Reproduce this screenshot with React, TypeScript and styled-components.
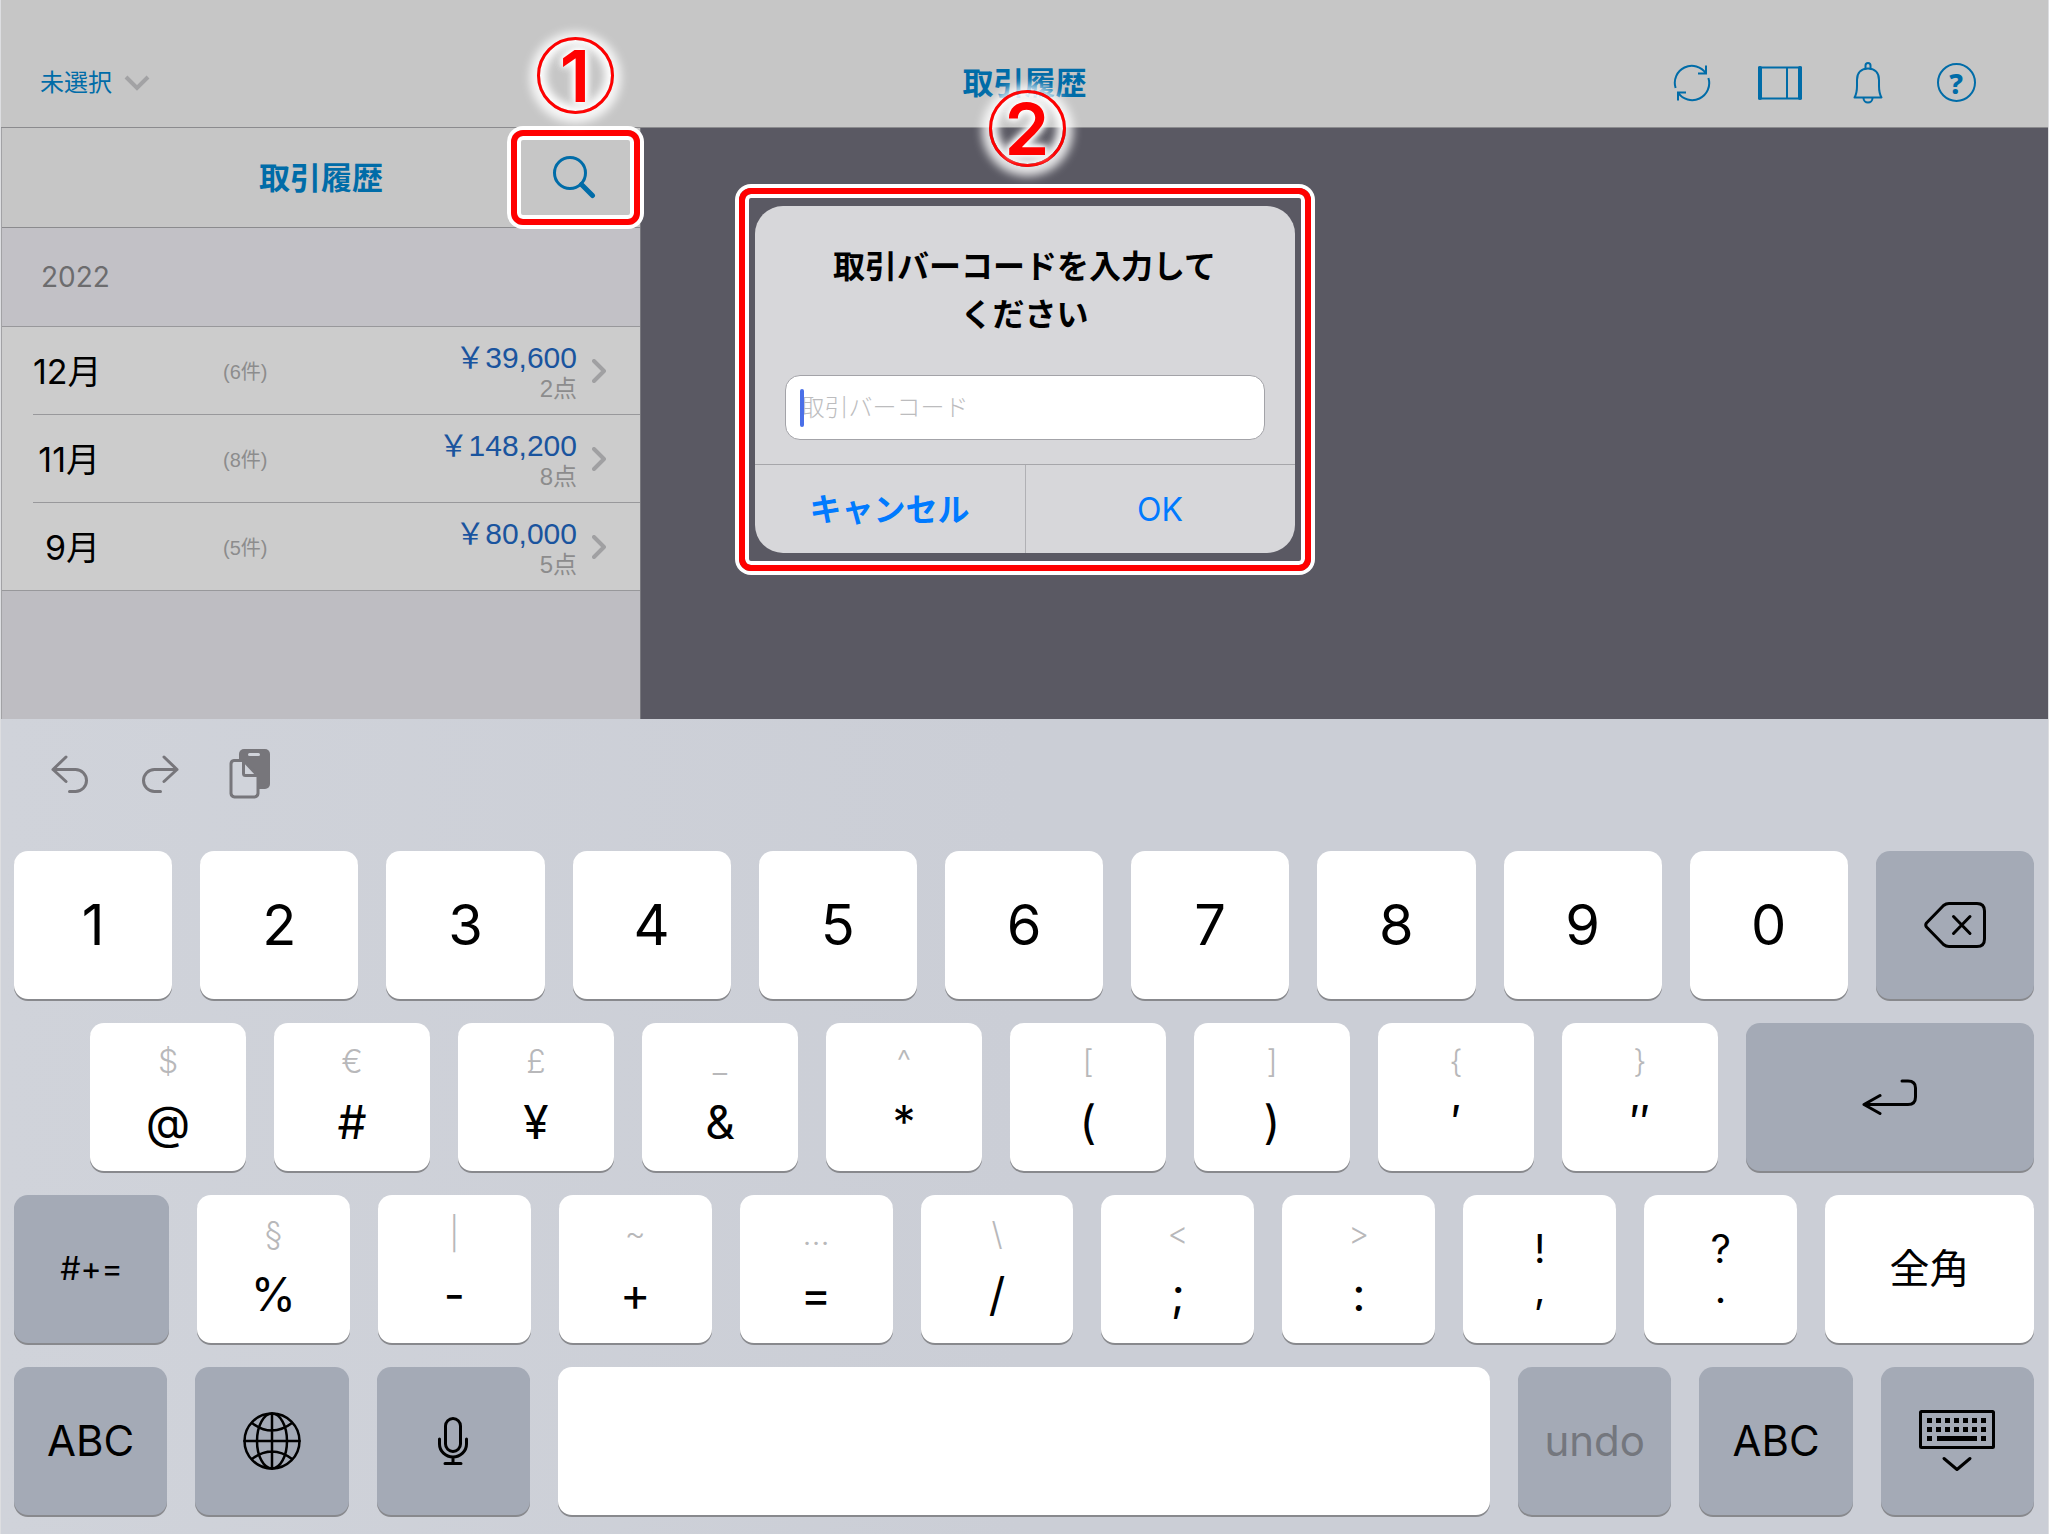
import React from "react";
import styled, { createGlobalStyle, css } from "styled-components";

const FONT = `Inter, "Noto Sans CJK JP", sans-serif`;
const FONT_LIST = `"Liberation Sans", "Noto Sans CJK JP", sans-serif`;
const BLUE = "#006ca8";
const LINE = "#8b8b8e";
const RED = "#ff0000";

const GlobalStyle = createGlobalStyle`
  * { box-sizing: border-box; }
  body { margin: 0; background: #dddee1; font-family: ${FONT}; }
  button, input { font: inherit; color: inherit; }
  button { margin: 0; padding: 0; border: 0; background: none; }
  h1, h2, h3, p, ul { margin: 0; padding: 0; }
  svg { display: block; flex: none; }
`;

const Screen = styled.div`
  position: relative;
  display: flex;
  flex-direction: column;
  min-height: 100vh;
  padding: 0 1px;
`;

/* ---------- top bar ---------- */

const TopBar = styled.header`
  display: grid;
  grid-template-columns: 1fr auto 1fr;
  align-items: center;
  height: 128px;
  padding: 38px 39px 0;
  background: #c6c6c6;
  border-bottom: 1px solid ${LINE};
  color: ${BLUE};
`;

const Title = styled.h1`
  font-size: 31px;
  line-height: 40px;
  font-weight: 700;
  color: ${BLUE};
  text-align: center;
`;

const StoreButton = styled.button`
  display: flex;
  align-items: center;
  gap: 12px;
  justify-self: start;
  font-size: 24px;
  line-height: 32px;
`;

const TopActions = styled.nav`
  display: flex;
  justify-self: end;
  padding-right: 9px;
`;

const TopAction = styled.button`
  display: flex;
  justify-content: center;
  align-items: center;
  width: 88px;
  height: 64px;
`;

/* ---------- history list ---------- */

const Main = styled.main`
  display: flex;
  flex: 1;
  background: #5a5963;
`;

const Sidebar = styled.aside`
  width: 640px;
  background: #bebdc2;
  border-left: 1px solid #a2a2a5;
  border-right: 1px solid #77777d;
`;

const SidebarHeader = styled.div`
  display: grid;
  grid-template-columns: 129px 1fr 129px;
  align-items: center;
  height: 100px;
  background: #c6c6c6;
  border-bottom: 1px solid ${LINE};
`;

const SearchButton = styled.button`
  position: relative;
  grid-column: 3;
  display: flex;
  justify-content: center;
  align-items: center;
  height: 95px;
  padding: 0 4px 2px 0;
  color: ${BLUE};
`;

const SidebarTitle = styled(Title).attrs({ as: "h2" })`
  grid-column: 2;
`;

const YearHeading = styled.h3`
  display: flex;
  align-items: center;
  height: 99px;
  padding-left: 39px;
  background: #c2c1c6;
  border-bottom: 1px solid #98989b;
  color: #6c6c6e;
  font-size: 28px;
  font-weight: 400;
`;

const MonthList = styled.ul`
  list-style: none;
  background: #cccccc;
  border-bottom: 1px solid #98989b;
`;

const MonthItem = styled.li`
  margin-left: 31px;
  & + & {
    border-top: 1px solid #98989b;
  }
`;

const MonthButton = styled.button`
  display: grid;
  grid-template-columns: 67px 1fr auto 14px;
  align-items: center;
  width: 100%;
  height: 87px;
  padding-right: 34px;
  text-align: right;
`;

const MonthName = styled.span`
  padding-bottom: 2px;
  font-size: 34px;
  white-space: nowrap;
  color: #000;
`;

const CountText = styled.span`
  padding-left: 123px;
  font-family: ${FONT_LIST};
  font-size: 20px;
  text-align: left;
  color: #8c8c8d;
`;

const Sums = styled.span`
  display: flex;
  flex-direction: column;
  margin-right: 15px;
  padding-top: 2px;
  font-family: ${FONT_LIST};
`;

const Amount = styled.span`
  font-size: 30px;
  line-height: 34px;
  color: #1a549e;
`;

const Points = styled.span`
  font-size: 24px;
  line-height: 28px;
  color: #8c8c8d;
`;

/* ---------- guide marks ---------- */

const markFrame = css`
  border: 6px solid ${RED};
  border-radius: 12px;
  box-shadow: 0 0 0 4px #fff, inset 0 0 0 4px #fff;
`;

const Mark = styled.span`
  position: absolute;
  inset: 0;
  ${markFrame}
`;

const StepBadge = styled.span<{ $rise: number; $inset: number }>`
  position: absolute;
  z-index: 2;
  bottom: calc(100% + ${(p) => p.$rise}px);
  left: calc(50% - ${(p) => p.$inset}px);
  display: flex;
  justify-content: center;
  align-items: center;
  width: 77px;
  height: 77px;
  border: 3px solid ${RED};
  border-radius: 50%;
  box-shadow: 0 2px 10px 7px rgba(255, 255, 255, 0.85), inset 0 0 8px 6px #fff;
  color: ${RED};
  font-size: 72px;
  line-height: 72px;
  font-weight: 600;
  text-shadow: 0 0 4px #fff, 0 0 8px #fff, 0 0 8px #fff, 0 0 12px #fff;
`;

/* ---------- dialog ---------- */

const Overlay = styled.div`
  position: absolute;
  inset: 0 0 auto;
  display: flex;
  justify-content: center;
  padding-top: 188px;
`;

const DialogMark = styled.div`
  position: relative;
  padding: 12px 10px;
  ${markFrame}
`;

const Dialog = styled.form`
  width: 540px;
  border-radius: 28px;
  background: #d7d7da;
  overflow: hidden;
`;

const DialogBody = styled.div`
  display: flex;
  flex-direction: column;
  gap: 36px;
  padding: 37px 30px 24px;
`;

const DialogTitle = styled.h2`
  font-size: 32px;
  line-height: 48px;
  font-weight: 700;
  text-align: center;
  color: #000;
`;

const Field = styled.div`
  position: relative;
`;

const BarcodeInput = styled.input`
  display: block;
  width: 100%;
  height: 65px;
  padding: 0 15px;
  border: 1px solid #a3a3a8;
  border-radius: 15px;
  background: #fff;
  font-size: 24px;
  font-weight: 300;
  outline: none;
  &::placeholder {
    color: #bcbcbe;
    opacity: 1;
  }
`;

const Caret = styled.span`
  position: absolute;
  top: 14px;
  bottom: 13px;
  left: 15px;
  width: 4px;
  border-radius: 2px;
  background: #4a6fe8;
`;

const DialogActions = styled.div`
  display: grid;
  grid-template-columns: 1fr 1fr;
  border-top: 1px solid #a6a6aa;
`;

const DialogButton = styled.button<{ $strong?: boolean }>`
  height: 88px;
  padding-bottom: ${(p) => (p.$strong ? 4 : 0)}px;
  font-size: 32px;
  font-weight: ${(p) => (p.$strong ? 700 : 400)};
  color: #007aff;
  & + & {
    border-left: 1px solid #b0b0b4;
  }
`;

/* ---------- keyboard ---------- */

const Keyboard = styled.section`
  position: relative;
  padding: 0 14px 19px 13px;
  background: linear-gradient(90deg, #d0d3da, #cbced6 50%, #cbced6);
`;

const KeyboardTools = styled.div`
  display: flex;
  align-items: center;
  gap: 39px;
  height: 110px;
  margin-bottom: 22px;
  padding-left: 30px;
  color: #77767b;
`;

const ToolButton = styled.button`
  display: flex;
  justify-content: center;
  width: 51px;
`;

const KeyRows = styled.div`
  display: flex;
  flex-direction: column;
  gap: 24px;
`;

const KeyRow = styled.div<{ $indent?: number }>`
  display: flex;
  gap: 28px;
  padding-left: ${(p) => p.$indent ?? 0}px;
`;

const KeyCap = styled.button<{ $grow: number; $dark?: boolean; $dim?: boolean; $size: number }>`
  display: flex;
  flex: ${(p) => p.$grow} 1 0;
  flex-direction: column;
  justify-content: center;
  align-items: center;
  min-width: 0;
  height: 148px;
  border-radius: 14px;
  background: ${(p) => (p.$dark ? "#a4aab6" : "#fff")};
  box-shadow: 0 2px 0 #88898d;
  font-size: ${(p) => p.$size}px;
  line-height: 1;
  color: ${(p) => (p.$dim ? "#74777e" : "#000")};
`;

const KeyHint = styled.span`
  margin-bottom: 20px;
  font-size: 32px;
  line-height: 32px;
  font-weight: 300;
  color: #b8b8ba;
`;

const KeyMain = styled.span`
  padding-bottom: 2px;
  font-size: 46px;
  line-height: 48px;
`;

const KeyStack = styled.span`
  font-size: 40px;
  line-height: 40px;
  white-space: pre-line;
`;

/* ---------- icons ---------- */

const line = {
  fill: "none",
  stroke: "currentColor",
  strokeLinecap: "round" as const,
  strokeLinejoin: "round" as const,
};

const DownIcon = () => (
  <svg width="26" height="18" viewBox="0 0 26 18" {...line} stroke="#a2a2a4" strokeWidth="4" strokeLinecap="butt" strokeLinejoin="miter">
    <path d="M2 3 13 14 24 3" />
  </svg>
);

const NextIcon = () => (
  <svg width="14" height="24" viewBox="0 0 14 24" {...line} stroke="#a0a0a2" strokeWidth="4">
    <path d="M2 2 12 12 2 22" />
  </svg>
);

const RefreshIcon = () => (
  <svg width="38" height="38" viewBox="0 0 38 38" {...line} strokeWidth="2" strokeLinecap="butt" strokeLinejoin="miter">
    <path d="M2.600 24A17 17 0 0 1 33 9.500M33 1.500V9.500H25" />
    <path d="M35.400 14A17 17 0 0 1 5 28.500M5 36.500V28.500H13" />
  </svg>
);

const PanelIcon = () => (
  <svg width="46" height="34" viewBox="0 0 46 34" {...line} strokeWidth="2">
    <rect x="2" y="1.500" width="42" height="31" />
    <path d="M3 2V32M43 2V32" strokeWidth="4" />
    <path d="M30 2V32" />
  </svg>
);

const BellIcon = () => (
  <svg width="30" height="42" viewBox="0 0 30 42" {...line} strokeWidth="2">
    <path d="M1.500 35.500C3.500 32 4 29 4 24V18C4 10 9 6.500 15 6.500S26 10 26 18V24C26 29 26.500 32 28.500 35.500Z" />
    <path d="M12.500 6.500V3.500A2.500 2.500 0 0 1 17.500 3.500V6.500M10.500 36A4.500 4.500 0 0 0 19.500 36" />
  </svg>
);

const HelpRing = styled.span`
  display: flex;
  justify-content: center;
  align-items: center;
  width: 39px;
  height: 39px;
  border: 2px solid ${BLUE};
  border-radius: 50%;
  font-family: "Noto Sans", sans-serif;
  font-size: 28px;
  line-height: 28px;
  font-weight: 800;
`;

const SearchIcon = () => (
  <svg width="44" height="44" viewBox="0 0 44 44" {...line}>
    <circle cx="18" cy="18" r="15.500" strokeWidth="3" />
    <path d="M29.500 29.500 40.500 40.500" strokeWidth="5" />
  </svg>
);

const UndoIcon = () => (
  <svg width="38" height="38" viewBox="0 0 38 38" {...line} strokeWidth="3">
    <path d="M15 2 2 14.500 15 26.500M2 14.500H24.500A11 11 0 0 1 24.500 36.500H18.500" />
  </svg>
);

const RedoIcon = () => (
  <svg width="38" height="38" viewBox="0 0 38 38" {...line} strokeWidth="3">
    <path d="M23 2 36 14.500 23 26.500M36 14.500H13.500A11 11 0 0 0 13.500 36.500H19.500" />
  </svg>
);

const PasteIcon = () => (
  <svg width="42" height="50" viewBox="0 0 42 50" {...line}>
    <rect x="10" y="0" width="31" height="40" rx="5" fill="currentColor" stroke="none" />
    <rect x="19" y="4" width="12" height="3" rx="1.500" fill="#d0d3da" stroke="none" />
    <path
      d="M5 11.500H14.500L29 27V44.500A4 4 0 0 1 25.500 48H5.500A4 4 0 0 1 2 44.500V15A3.500 3.500 0 0 1 5 11.500Z"
      fill="#d0d3da"
      strokeWidth="3"
    />
    <path d="M14.500 12V24.500A2 2 0 0 0 16.500 26.500H28.500" strokeWidth="3" />
  </svg>
);

const DeleteIcon = () => (
  <svg width="62" height="46" viewBox="0 0 62 46" {...line} strokeWidth="3">
    <path d="M19.500 3.500Q22 1.500 25 1.500H53Q60.500 1.500 60.500 9V37Q60.500 44.500 53 44.500H25Q22 44.500 19.500 42.500L2.500 25Q1 23 2.500 21Z" />
    <path d="M29.500 14.500 46 31.500M46 14.500 29.500 31.500" />
  </svg>
);

const ReturnIcon = () => (
  <svg width="56" height="36" viewBox="0 0 56 36" {...line} strokeWidth="3">
    <path d="M18 16.500 2 25.500 18 34.500M2 25.500H46Q53.500 25.500 53.500 18V9Q53.500 2 46 2H40" />
  </svg>
);

const GlobeIcon = () => (
  <svg width="58" height="58" viewBox="0 0 58 58" {...line} strokeWidth="2.500">
    <circle cx="29" cy="29" r="27.500" />
    <ellipse cx="29" cy="29" rx="15" ry="27.500" />
    <path d="M29 1.500V56.500M1.500 29H56.500M9 11Q29 26 49 11M9 47Q29 32 49 47" />
  </svg>
);

const MicIcon = () => (
  <svg width="30" height="48" viewBox="0 0 30 48" {...line} strokeWidth="3">
    <rect x="7.500" y="1.500" width="15" height="33" rx="7.500" />
    <path d="M1.500 22V27A13.500 13 0 0 0 28.500 27V22M15 40V46M7 46.500H23" />
  </svg>
);

const HideKeyboardIcon = () => {
  const columns = [0, 1, 2, 3, 4, 5, 6];
  return (
    <svg width="76" height="62" viewBox="0 0 76 62" {...line} strokeWidth="3">
      <rect x="1.500" y="1.500" width="73" height="36" rx="1" />
      <g fill="currentColor" stroke="none">
        {columns.map((c) => (
          <React.Fragment key={c}>
            <rect x={8 + c * 9} y="8" width="5" height="5" />
            <rect x={8 + c * 9} y="17" width="5" height="5" />
          </React.Fragment>
        ))}
        <rect x="8" y="26" width="5" height="5" />
        <rect x="18" y="26" width="40" height="5" />
        <rect x="62" y="26" width="5" height="5" />
      </g>
      <path d="M25 48.500 38 59.500 51 48.500" />
    </svg>
  );
};

/* ---------- data ---------- */

const months = [
  { name: "12月", count: "(6件)", amount: "￥39,600", points: "2点" },
  { name: "11月", count: "(8件)", amount: "￥148,200", points: "8点" },
  { name: "9月", count: "(5件)", amount: "￥80,000", points: "5点" },
];

const digits = ["1", "2", "3", "4", "5", "6", "7", "8", "9", "0"];

const symbolRow = [
  ["$", "@"],
  ["€", "#"],
  ["£", "¥"],
  ["_", "&"],
  ["^", "*"],
  ["[", "("],
  ["]", ")"],
  ["{", "′"],
  ["}", "″"],
];

const punctuationRow = [
  ["§", "%"],
  ["|", "-"],
  ["~", "+"],
  ["…", "="],
  ["\\", "/"],
  ["<", ";"],
  [">", ":"],
];

const stackedKeys = ["!\n,", "?\n."];

type KeyProps = {
  grow?: number;
  dark?: boolean;
  dim?: boolean;
  size?: number;
  label?: string;
  children?: React.ReactNode;
};

const Key = ({ grow = 153, dark, dim, size = 42, label, children }: KeyProps) => (
  <KeyCap type="button" $grow={grow} $dark={dark} $dim={dim} $size={size} aria-label={label}>
    {children}
  </KeyCap>
);

const HintKey = ({ hint, main, grow }: { hint: string; main: string; grow?: number }) => (
  <Key grow={grow}>
    <KeyHint>{hint}</KeyHint>
    <KeyMain>{main}</KeyMain>
  </Key>
);

export default function App() {
  return (
    <Screen>
      <GlobalStyle />
      <TopBar>
        <StoreButton type="button">
          未選択
          <DownIcon />
        </StoreButton>
        <Title>取引履歴</Title>
        <TopActions>
          <TopAction type="button" aria-label="更新"><RefreshIcon /></TopAction>
          <TopAction type="button" aria-label="パネル"><PanelIcon /></TopAction>
          <TopAction type="button" aria-label="通知"><BellIcon /></TopAction>
          <TopAction type="button" aria-label="ヘルプ"><HelpRing>?</HelpRing></TopAction>
        </TopActions>
      </TopBar>

      <Main>
        <Sidebar>
          <SidebarHeader>
            <SidebarTitle>取引履歴</SidebarTitle>
            <SearchButton type="button" aria-label="検索">
              <SearchIcon />
              <Mark />
              <StepBadge $rise={16} $inset={39}>1</StepBadge>
            </SearchButton>
          </SidebarHeader>
          <YearHeading>2022</YearHeading>
          <MonthList>
            {months.map((m) => (
              <MonthItem key={m.name}>
                <MonthButton type="button">
                  <MonthName>{m.name}</MonthName>
                  <CountText>{m.count}</CountText>
                  <Sums>
                    <Amount>{m.amount}</Amount>
                    <Points>{m.points}</Points>
                  </Sums>
                  <NextIcon />
                </MonthButton>
              </MonthItem>
            ))}
          </MonthList>
        </Sidebar>
      </Main>

      <Keyboard aria-label="キーボード">
        <KeyboardTools>
          <ToolButton type="button" aria-label="取り消す"><UndoIcon /></ToolButton>
          <ToolButton type="button" aria-label="やり直す"><RedoIcon /></ToolButton>
          <ToolButton type="button" aria-label="ペースト"><PasteIcon /></ToolButton>
        </KeyboardTools>
        <KeyRows>
          <KeyRow>
            {digits.map((d) => (
              <Key key={d} size={56}>{d}</Key>
            ))}
            <Key dark label="削除"><DeleteIcon /></Key>
          </KeyRow>
          <KeyRow $indent={76}>
            {symbolRow.map(([hint, main]) => (
              <HintKey key={main} hint={hint} main={main} grow={156} />
            ))}
            <Key grow={288} dark label="改行"><ReturnIcon /></Key>
          </KeyRow>
          <KeyRow>
            <Key grow={155} dark size={32}>#+=</Key>
            {punctuationRow.map(([hint, main]) => (
              <HintKey key={main} hint={hint} main={main} />
            ))}
            {stackedKeys.map((text) => (
              <Key key={text}>
                <KeyStack>{text}</KeyStack>
              </Key>
            ))}
            <Key grow={209} size={40}>全角</Key>
          </KeyRow>
          <KeyRow>
            <Key dark>ABC</Key>
            <Key dark label="次のキーボード"><GlobeIcon /></Key>
            <Key dark label="音声入力"><MicIcon /></Key>
            <Key grow={930} label="空白" />
            <Key dark dim>undo</Key>
            <Key dark>ABC</Key>
            <Key dark label="キーボードを隠す"><HideKeyboardIcon /></Key>
          </KeyRow>
        </KeyRows>
      </Keyboard>

      <Overlay>
        <DialogMark>
          <StepBadge $rise={27} $inset={36}>2</StepBadge>
          <Dialog role="dialog" aria-labelledby="dialog-title">
            <DialogBody>
              <DialogTitle id="dialog-title">
                取引バーコードを入力して
                <br />
                ください
              </DialogTitle>
              <Field>
                <BarcodeInput type="text" placeholder="取引バーコード" aria-label="取引バーコード" />
                <Caret />
              </Field>
            </DialogBody>
            <DialogActions>
              <DialogButton type="button" $strong>キャンセル</DialogButton>
              <DialogButton type="button">OK</DialogButton>
            </DialogActions>
          </Dialog>
        </DialogMark>
      </Overlay>
    </Screen>
  );
}
